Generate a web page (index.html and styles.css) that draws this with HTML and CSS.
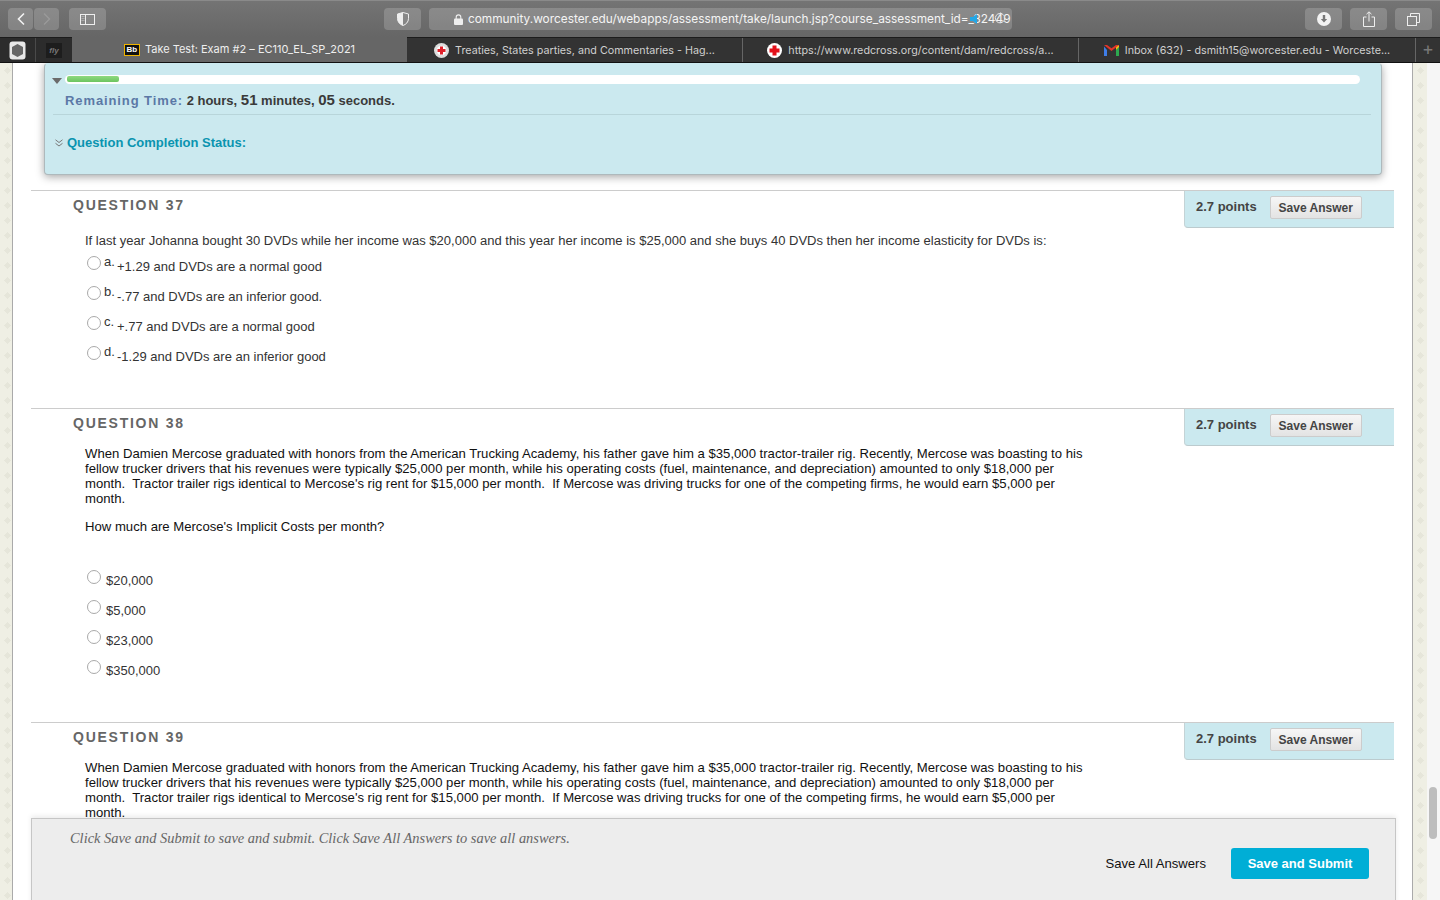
FILE: index.html
```html
<!DOCTYPE html>
<html lang="en">
<head>
    <meta charset="UTF-8">
    <meta name="viewport" content="width=device-width, initial-scale=1.0">
    <title>Take Test: Exam #2 – EC110_EL_SP_2021</title>
    <link rel="stylesheet" href="styles.css">
</head>
<body>
    <header class="browser">
        <div class="toolbar">
            <div class="tool-button nav-button">
                <svg width="10" height="14" viewBox="0 0 10 14"><path d="M8 1.5 2.5 7 8 12.5" fill="none" stroke="#f2f2f2" stroke-width="1.6"/></svg>
            </div>
            <div class="tool-button nav-button nav-next">
                <svg width="10" height="14" viewBox="0 0 10 14"><path d="M2 1.5 7.5 7 2 12.5" fill="none" stroke="#9a9a9a" stroke-width="1.4"/></svg>
            </div>
            <div class="tool-button wide sidebar-button">
                <svg width="15" height="11" viewBox="0 0 15 11"><rect x=".5" y=".5" width="14" height="10" fill="none" stroke="#eee"/><path d="M5.500 1v9" stroke="#eee"/><path d="M1.500 2.500h3M1.500 4.500h3M1.500 6.500h3" stroke="#aaa"/></svg>
            </div>
            <div class="tool-button wide shield-button">
                <svg width="12" height="14" viewBox="0 0 12 14"><path d="M6 .5 11.500 2v4.500C11.500 10 9 12.500 6 13.500 3 12.500.5 10 .5 6.500V2z" fill="none" stroke="#eee"/><path d="M6 .5 .5 2v4.500C.5 10 3 12.500 6 13.500z" fill="#eee"/></svg>
            </div>
            <div class="address-bar">
                <svg class="lock" width="9" height="11" viewBox="0 0 9 11"><path d="M2.200 5V3.200a2.300 2.300 0 0 1 4.600 0V5" fill="none" stroke="#eee" stroke-width="1.100"/><rect y="4.600" width="9" height="6.400" rx="1" fill="#eee"/></svg>
                <span class="url">community.worcester.edu/webapps/assessment/take/launch.jsp?course_assessment_id=_32449</span>
                <svg class="audio-icon" width="10" height="10" viewBox="0 0 10 10"><path d="M0 3h3l4-3v10L3 7H0z" fill="#22a7e6"/></svg>
                <svg class="reload-icon" width="12" height="12" viewBox="0 0 12 12"><path d="M9.800 3.400A4.700 4.700 0 1 0 10.700 6" fill="none" stroke="#e8e8e8"/><path d="M6 .2 8.400 1.600 6 3z" fill="#e8e8e8"/></svg>
            </div>
            <div class="tool-button wide download-button">
                <svg width="14" height="14" viewBox="0 0 14 14"><circle cx="7" cy="7" r="7" fill="#f2f2f2"/><path d="M5.800 3h2.400v4h2L7 10.500 3.800 7h2z" fill="#777"/></svg>
            </div>
            <div class="tool-button wide">
                <svg width="12" height="16" viewBox="0 0 12 16"><path d="M3.500 6H.5v9.500h11V6h-3M6 10.500V1M3.500 3.200 6 .8l2.500 2.400" fill="none" stroke="#eee"/></svg>
            </div>
            <div class="tool-button wide">
                <svg width="13" height="13" viewBox="0 0 13 13"><path d="M3.500 3V.5h9v9H10" fill="none" stroke="#eee"/><rect x=".5" y="3.500" width="9" height="9" fill="none" stroke="#eee"/></svg>
            </div>
        </div>

        <div class="tabbar">
            <div class="pinned-tab pinned-first">
                <svg width="17" height="19" viewBox="0 0 17 19"><rect x=".5" y=".5" width="16" height="18" rx="3" fill="#e8e8e8"/><path d="M8.500 3 14 6v7l-5.500 3L3 13V6z" fill="#666"/></svg>
            </div>
            <div class="pinned-tab pinned-second"><span class="fly-logo">fly</span></div>
            <div class="tab tab-active">
                <span class="bb-icon">Bb</span>
                <span class="tab-title">Take Test: Exam #2 – EC110_EL_SP_2021</span>
            </div>
            <div class="tab">
                <svg class="favicon" width="15" height="15" viewBox="0 0 15 15"><circle cx="7.500" cy="7.500" r="7.500" fill="#ddd"/><circle cx="7.500" cy="7.500" r="4.800" fill="#fff"/><path d="M6 3.500h3V6h2.500v3H9v2.500H6V9H3.500V6H6z" fill="#e0202a"/></svg>
                <span class="tab-title">Treaties, States parties, and Commentaries - Hag...</span>
            </div>
            <div class="tab">
                <svg class="favicon" width="15" height="15" viewBox="0 0 15 15"><circle cx="7.500" cy="7.500" r="7.500" fill="#fff"/><path d="M5.500 2.500h4v3h3v4h-3v3h-4v-3h-3v-4h3z" fill="#e3111b"/></svg>
                <span class="tab-title">https://www.redcross.org/content/dam/redcross/a...</span>
            </div>
            <div class="tab tab-last">
                <svg class="favicon" width="15" height="11" viewBox="0 0 15 11"><path d="M0 1.500V11h3V5z" fill="#3f7ee8"/><path d="M12 5v6h3V1.500z" fill="#2da94f"/><path d="M12 1 15 0v2l-3 3z" fill="#f5bb12"/><path d="M0 0 7.500 6 15 0 12 0 7.500 3.200 3 0z" fill="#e3342a"/></svg>
                <span class="tab-title">Inbox (632) - dsmith15@worcester.edu - Worceste...</span>
            </div>
            <div class="new-tab">+</div>
        </div>
    </header>

    <div class="page">
        <div class="side-strip side-left"></div>

        <main class="content">
            <section class="timer-panel">
                <div class="progress-row">
                    <span class="caret"></span>
                    <div class="progress-track"><div class="progress-fill" style="width: 4%;"></div></div>
                </div>
                <div class="remaining">
                    <span class="remaining-label">Remaining Time:</span>
                    2 hours, <span class="remaining-big">51</span> minutes, <span class="remaining-big">05</span> seconds.
                </div>
                <div class="completion">
                    <svg width="8" height="8" viewBox="0 0 8 8"><path d="M.5 .8 4 3.500 7.500 .8M.5 4.300 4 7 7.500 4.300" fill="none" stroke="#777"/></svg>
                    <span>Question Completion Status:</span>
                </div>
            </section>

            <section class="question">
                <div class="question-head">
                    <h2 class="question-title">QUESTION 37</h2>
                    <div class="points-box">
                        <span class="points">2.7 points</span>
                        <button class="save-answer">Save Answer</button>
                    </div>
                </div>
                <div class="question-body">
                    <p class="prompt prompt-short">If last year Johanna bought 30 DVDs while her income was $20,000 and this year her income is $25,000 and she buys 40 DVDs then her income elasticity for DVDs is:</p>
                    <div class="options">
                        <label class="option"><input type="radio" name="q37"><span class="letter">a.</span><span class="answer">+1.29 and DVDs are a normal good</span></label>
                        <label class="option"><input type="radio" name="q37"><span class="letter">b.</span><span class="answer">-.77 and DVDs are an inferior good.</span></label>
                        <label class="option"><input type="radio" name="q37"><span class="letter">c.</span><span class="answer">+.77 and DVDs are a normal good</span></label>
                        <label class="option"><input type="radio" name="q37"><span class="letter">d.</span><span class="answer">-1.29 and DVDs are an inferior good</span></label>
                    </div>
                </div>
            </section>

            <section class="question">
                <div class="question-head">
                    <h2 class="question-title">QUESTION 38</h2>
                    <div class="points-box">
                        <span class="points">2.7 points</span>
                        <button class="save-answer">Save Answer</button>
                    </div>
                </div>
                <div class="question-body">
                    <p class="prompt">When Damien Mercose graduated with honors from the American Trucking Academy, his father gave him a $35,000 tractor-trailer rig. Recently, Mercose was boasting to his fellow trucker drivers that his revenues were typically $25,000 per month, while his operating costs (fuel, maintenance, and depreciation) amounted to only $18,000 per month.&nbsp; Tractor trailer rigs identical to Mercose's rig rent for $15,000 per month.&nbsp; If Mercose was driving trucks for one of the competing firms, he would earn $5,000 per month.</p>
                    <p class="prompt prompt-ask">How much are Mercose's Implicit Costs per month?</p>
                    <div class="options options-plain">
                        <label class="option"><input type="radio" name="q38"><span class="answer">$20,000</span></label>
                        <label class="option"><input type="radio" name="q38"><span class="answer">$5,000</span></label>
                        <label class="option"><input type="radio" name="q38"><span class="answer">$23,000</span></label>
                        <label class="option"><input type="radio" name="q38"><span class="answer">$350,000</span></label>
                    </div>
                </div>
            </section>

            <section class="question">
                <div class="question-head">
                    <h2 class="question-title">QUESTION 39</h2>
                    <div class="points-box">
                        <span class="points">2.7 points</span>
                        <button class="save-answer">Save Answer</button>
                    </div>
                </div>
                <div class="question-body">
                    <p class="prompt">When Damien Mercose graduated with honors from the American Trucking Academy, his father gave him a $35,000 tractor-trailer rig. Recently, Mercose was boasting to his fellow trucker drivers that his revenues were typically $25,000 per month, while his operating costs (fuel, maintenance, and depreciation) amounted to only $18,000 per month.&nbsp; Tractor trailer rigs identical to Mercose's rig rent for $15,000 per month.&nbsp; If Mercose was driving trucks for one of the competing firms, he would earn $5,000 per month.</p>
                </div>
            </section>

            <footer class="submit-bar">
                <p class="submit-note">Click Save and Submit to save and submit. Click Save All Answers to save all answers.</p>
                <div class="submit-actions">
                    <button class="save-all">Save All Answers</button>
                    <button class="save-submit">Save and Submit</button>
                </div>
            </footer>
        </main>

        <div class="side-strip side-right"></div>
        <div class="scroll-gutter"><div class="scroll-thumb"></div></div>
    </div>
</body>
</html>
```

FILE: styles.css
```css
* {
    margin: 0;
    padding: 0;
    box-sizing: border-box;
}

html, body {
    height: 100%;
    overflow: hidden;
}

body {
    font-family: "Liberation Sans", Arial, sans-serif;
    font-size: 13px;
    line-height: 15px;
    color: #222;
    background: #fff;
    display: flex;
    flex-direction: column;
}

/* browser chrome */

.browser {
    flex: none;
}

.toolbar {
    height: 37px;
    display: flex;
    align-items: flex-start;
    padding-left: 8px;
    background: linear-gradient(#747474 0%, #666 100%);
    border-top: 1px solid #8a8a8a;
    padding-top: 7px;
}

.tool-button {
    height: 22px;
    display: flex;
    align-items: center;
    justify-content: center;
    background: rgba(255, 255, 255, 0.18);
    border-radius: 4px;
    flex: none;
}

.nav-button {
    width: 25px;
}

.nav-next {
    margin-left: 1px;
}

.wide {
    width: 37px;
    margin-left: 8px;
}

.sidebar-button {
    margin-left: 10px;
}

.shield-button {
    margin-left: 278px;
}

.address-bar {
    position: relative;
    width: 583px;
    height: 22px;
    margin-left: 8px;
    padding-left: 25px;
    display: flex;
    align-items: center;
    background: rgba(255, 255, 255, 0.18);
    border-radius: 4px;
    flex: none;
}

.lock {
    flex: none;
    margin-right: 5px;
}

.url {
    font-family: Inter, "Liberation Sans", sans-serif;
    font-size: 11.850px;
    color: #f4f4f4;
    white-space: nowrap;
}

.audio-icon {
    position: absolute;
    left: 541px;
    top: 6px;
}

.reload-icon {
    position: absolute;
    left: 565px;
    top: 4px;
}

.download-button {
    margin-left: 293px;
}

.tabbar {
    height: 26px;
    display: flex;
    background: #333;
    border-top: 1px solid #1c1c1c;
    border-bottom: 1px solid #111;
    font-family: Inter, "Liberation Sans", sans-serif;
    color: #cfcfcf;
    font-size: 10.750px;
}

.pinned-tab {
    display: flex;
    align-items: center;
    justify-content: center;
    flex: none;
    background: #2c2c2c;
}

.pinned-first {
    width: 36px;
    border-right: 1px solid #4a4a4a;
}

.pinned-second {
    width: 36px;
}

.fly-logo {
    font-family: "Liberation Sans", Arial, sans-serif;
    font-size: 8px;
    font-weight: bold;
    font-style: italic;
    color: #777;
    background: #1d1d1d;
    padding: 0 3px;
}

.tab {
    width: 336px;
    display: flex;
    align-items: center;
    justify-content: center;
    flex: none;
    border-right: 1px solid #666;
}

.tab-active {
    width: 335px;
    margin-top: -1px;
    background: #666;
    color: #eee;
    font-size: 11px;
    border-right: none;
}

.tab-last {
    width: 337px;
}

.tab-title {
    white-space: nowrap;
}

.favicon {
    margin-right: 6px;
    flex: none;
}

.bb-icon {
    width: 16px;
    height: 12px;
    margin-right: 5px;
    display: flex;
    align-items: center;
    justify-content: center;
    background: #111;
    border: 1px solid #f0b400;
    font-family: "Liberation Sans", Arial, sans-serif;
    color: #fff;
    font-size: 8px;
    font-weight: bold;
}

.new-tab {
    flex: 1;
    text-align: center;
    font-size: 18px;
    line-height: 22px;
    font-weight: normal;
    color: #777;
}

/* page */

.page {
    flex: 1;
    min-height: 0;
    display: flex;
}

.side-strip {
    flex: none;
    background-color: #efefe4;
    background-image:
        radial-gradient(ellipse 4px 1.500px at center, #e6e6da 90%, transparent 100%),
        radial-gradient(ellipse 1.500px 4px at center, #e6e6da 90%, transparent 100%);
    background-size: 15px 15px;
}

.side-left {
    width: 13px;
    border-right: 1px solid #aaa;
}

.side-right {
    width: 15px;
    border-left: 1px solid #aaa;
}

.scroll-gutter {
    width: 13px;
    flex: none;
    position: relative;
    background: #f6f6f6;
}

.scroll-thumb {
    position: absolute;
    left: 2px;
    top: 724px;
    width: 8px;
    height: 52px;
    border-radius: 4px;
    background: #bdbdbd;
}

.content {
    width: 1399px;
    flex: none;
    position: relative;
    overflow: hidden;
}

/* timer */

.timer-panel {
    width: 1338px;
    height: 112px;
    margin-left: 31px;
    padding-top: 11px;
    background: #cbe9ef;
    border: 1px solid #aeb9bc;
    border-top-color: #cbe9ef;
    border-radius: 4px;
    box-shadow: 0 2px 8px rgba(0, 0, 0, 0.35);
}

.progress-row {
    height: 9px;
    display: flex;
    align-items: center;
    padding-left: 7px;
}

.caret {
    width: 0;
    height: 0;
    border-left: 5px solid transparent;
    border-right: 5px solid transparent;
    border-top: 6px solid #6b6b6b;
    margin-right: 3px;
    margin-top: 2px;
}

.progress-track {
    width: 1295px;
    height: 9px;
    padding: 1px 2px;
    background: #fff;
    border-radius: 5px;
}

.progress-fill {
    height: 6px;
    background: linear-gradient(#8fd97f, #6cc45f);
    border-radius: 2px;
}

.remaining {
    margin: 8px 10px 0 8px;
    padding: 0 0 6px 12px;
    border-bottom: 1px solid #b8d5da;
    font-weight: bold;
    font-size: 13px;
    line-height: 15px;
    color: #3a3a3a;
}

.remaining-label {
    color: #5b78a6;
    letter-spacing: 0.900px;
    font-size: 13px;
}

.remaining-big {
    font-size: 15px;
}

.completion {
    display: flex;
    align-items: center;
    gap: 4px;
    margin-top: 20px;
    padding-left: 10px;
    font-weight: bold;
    font-size: 13px;
    color: #0a94b0;
}

/* questions */

.question {
    width: 1363px;
    margin-left: 18px;
    padding-bottom: 37px;
    border-top: 1px solid #ccc;
}

.timer-panel + .question {
    margin-top: 15px;
}

.question-head {
    display: flex;
    justify-content: space-between;
    align-items: flex-start;
}

.question-title {
    padding-left: 42px;
    padding-top: 6px;
    font-size: 14px;
    line-height: 16px;
    font-weight: bold;
    letter-spacing: 1.750px;
    color: #666;
}

.points-box {
    width: 210px;
    height: 37px;
    display: flex;
    align-items: flex-start;
    padding: 5px 0 0 11px;
    background: #cbe9ef;
    border-left: 1px solid #c4d3d6;
    border-bottom: 1px solid #bccbce;
    border-radius: 0 0 0 4px;
}

.points {
    margin-top: 3px;
    font-weight: bold;
    font-size: 13px;
    color: #444;
}

.save-answer {
    width: 92px;
    height: 23px;
    margin-left: 13px;
    font-family: "Liberation Sans", Arial, sans-serif;
    font-weight: bold;
    font-size: 12px;
    color: #444;
    background: linear-gradient(#f6f6f6, #e3e3e3);
    border: 1px solid #ccc;
    border-radius: 2px;
}

.question-body {
    padding-left: 54px;
    width: 1056px;
}

.prompt {
    font-size: 13.130px;
    color: #111;
}

.prompt-short {
    margin-top: 5px;
    font-size: 13.030px;
    color: #333;
    white-space: nowrap;
}

.prompt-ask {
    margin-top: 13px;
}

.options {
    margin-top: 3px;
}

.options-plain {
    margin-top: 31px;
}

.option {
    height: 30px;
    display: flex;
    align-items: flex-start;
    color: #333;
}

.option input {
    appearance: none;
    width: 14px;
    height: 14px;
    margin: 5px 0 0 2px;
    flex: none;
    background: #fff;
    border: 1px solid #a9a9a9;
    border-radius: 50%;
}

.letter {
    width: 13px;
    margin: 3px 0 0 3px;
    flex: none;
}

.answer {
    margin-top: 8px;
}

.options-plain .answer {
    margin-left: 5px;
}

/* submit bar */

.submit-bar {
    position: absolute;
    left: 18px;
    top: 755px;
    width: 1365px;
    height: 90px;
    background: #ededed;
    border: 1px solid #c6c6c6;
    box-shadow: 0 -2px 5px rgba(0, 0, 0, 0.08);
}

.submit-note {
    padding: 11px 0 0 38px;
    font-family: "Liberation Serif", "Times New Roman", serif;
    font-style: italic;
    font-size: 14.430px;
    line-height: 16px;
    color: #666;
}

.submit-actions {
    display: flex;
    justify-content: flex-end;
    align-items: center;
    margin-top: 2px;
    padding-right: 26px;
}

.save-all {
    height: 31px;
    padding: 0 25px 0 16px;
    font-family: "Liberation Sans", Arial, sans-serif;
    font-size: 13.100px;
    color: #111;
    background: none;
    border: none;
}

.save-submit {
    width: 138px;
    height: 31px;
    font-family: "Liberation Sans", Arial, sans-serif;
    font-weight: bold;
    font-size: 13px;
    color: #fff;
    background: #00aed6;
    border: none;
    border-radius: 3px;
}
```
